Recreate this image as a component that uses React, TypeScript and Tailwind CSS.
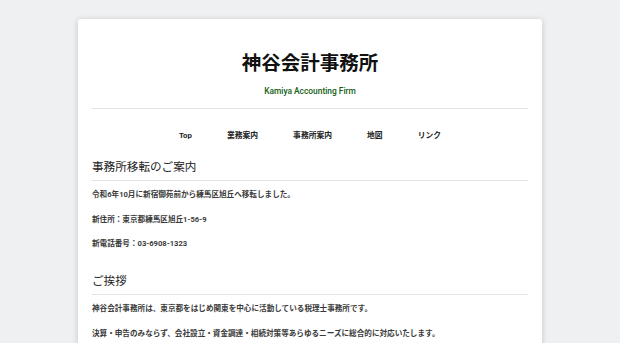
import React from "react";

const navItems = ["Top", "業務案内", "事務所案内", "地図", "リンク"];

const Section = ({ title, lines }: { title: string; lines: string[] }) => (
  <section className="flex flex-col">
    <h2 className="text-[11.6px] leading-[16px] font-normal text-[#222]">{title}</h2>
    <div className="mt-[5px] h-px bg-[#e4e4e4]" />
    <div className="mt-[8px] flex flex-col gap-[12.5px]">
      {lines.map((line) => (
        <p key={line} className="text-[7.6px] leading-[12px] font-bold text-[#3a3a3a]">
          {line}
        </p>
      ))}
    </div>
  </section>
);

export default function App() {
  return (
    <div
      className="min-h-[343px] w-full bg-[#eff0f2] flex justify-center pt-[19px] overflow-hidden"
      style={{ fontFamily: 'Roboto, "Noto Sans CJK JP", sans-serif' }}
    >
      <div className="w-[464px] bg-white rounded-[3px] shadow-[0_1px_6px_rgba(0,0,0,0.18)] px-[14px] pt-[31px] pb-[40px] flex flex-col">
        <h1 className="text-center text-[19.5px] leading-[28px] font-bold text-[#111]">
          神谷会計事務所
        </h1>
        <p className="mt-[7px] text-center text-[8.4px] leading-[12px] font-medium text-[#11600f]">
          Kamiya Accounting Firm
        </p>
        <div className="mt-[11px] h-px bg-[#e4e4e4]" />
        <nav className="mt-[21px] flex justify-center gap-[35px]">
          {navItems.map((item) => (
            <span key={item} className="text-[7.8px] leading-[12px] font-bold text-[#222]">
              {item}
            </span>
          ))}
        </nav>
        <div className="mt-[17px] flex flex-col gap-[23px]">
          <Section
            title="事務所移転のご案内"
            lines={[
              "令和6年10月に新宿御苑前から練馬区旭丘へ移転しました。",
              "新住所：東京都練馬区旭丘1-56-9",
              "新電話番号：03-6908-1323",
            ]}
          />
          <Section
            title="ご挨拶"
            lines={[
              "神谷会計事務所は、東京都をはじめ関東を中心に活動している税理士事務所です。",
              "決算・申告のみならず、会社設立・資金調達・相続対策等あらゆるニーズに総合的に対応いたします。",
            ]}
          />
        </div>
      </div>
    </div>
  );
}
